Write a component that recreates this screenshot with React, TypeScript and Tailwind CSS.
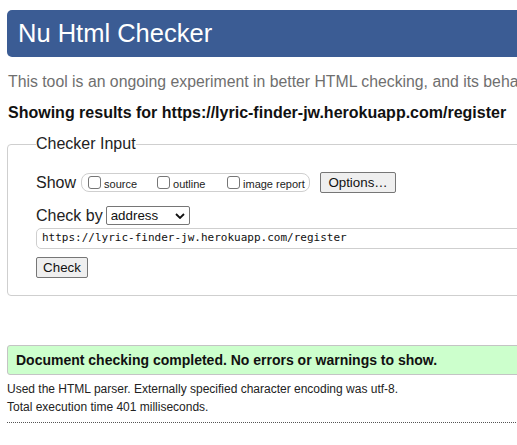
import React from 'react';

// Nu Html Checker result page (cropped view)

const sans = "font-['Liberation_Sans',Arial,sans-serif]";

function CheckOption({ label, className = '' }: { label: string; className?: string }) {
  return (
    <label className={`flex items-center ${className}`}>
      <span className="w-[13px] h-[13px] border border-[#767676] rounded-[3px] bg-white shrink-0" />
      <span className="text-[11px] leading-[13px] ml-[3px] mt-[3px] text-[#222]">{label}</span>
    </label>
  );
}

export default function App() {
  return (
    <div className={`w-[517px] h-[445px] overflow-hidden bg-white ${sans}`}>
      <div className="w-[780px] pl-[7px] pt-[10px]">
        {/* Title bar */}
        <div className="h-[47px] bg-[#3b5c94] rounded-[5px] pl-[11px] text-white text-[25.5px] leading-[47px]">
          Nu Html Checker
        </div>

        <p className="mt-[16px] pl-[1px] text-[15.8px] leading-[18px] text-[#6f6f6f] whitespace-nowrap">
          This tool is an ongoing experiment in better HTML checking, and its behavior remains subject to change
        </p>
        <p className="mt-[13px] pl-[1px] text-[16px] leading-[18px] font-bold text-[#111] whitespace-nowrap">
          Showing results for https://lyric-finder-jw.herokuapp.com/register
        </p>

        {/* Checker input */}
        <fieldset className="mt-[13px] border border-[#cfcfcf] rounded-[4px] px-[28px] pb-[17px]">
          <legend className="text-[16px] leading-[18px] text-[#222]">Checker Input</legend>

          <div className="mt-[19px] h-[21px] flex items-center">
            <span className="text-[16px] leading-[18px] text-[#222]">Show</span>
            <div className="ml-[5px] w-[229px] h-[19px] border border-[#cfcfcf] rounded-[8px] flex items-center pl-[6px]">
              <CheckOption label="source" className="w-[69px]" />
              <CheckOption label="outline" className="w-[70px]" />
              <CheckOption label="image report" />
            </div>
            <button className="ml-[10px] h-[21px] w-[76px] bg-[#efefef] border border-[#767676] rounded-[2px] text-[13.33px] text-[#111]">
              Options…
            </button>
          </div>

          <div className="mt-[13px] h-[19px] flex items-center">
            <span className="text-[16px] leading-[18px] text-[#222]">Check by</span>
            <div className="ml-[3px] w-[84px] h-[19px] border border-[#767676] rounded-[2px] flex items-center justify-between pl-[4px] pr-[4px] bg-white">
              <span className="text-[13.33px] leading-[15px] text-[#111]">address</span>
              <svg width="10" height="6" viewBox="0 0 10 6" className="mt-[1px]">
                <path d="M1 1 L5 5 L9 1" fill="none" stroke="#111" strokeWidth="1.8" />
              </svg>
            </div>
          </div>

          <div className="mt-[3px] h-[21px] w-[700px] border border-[#cfcfcf] rounded-[5px] flex items-center pl-[5px]">
            <span className="font-['DejaVu_Sans_Mono',monospace] text-[11px] text-[#111]">
              https://lyric-finder-jw.herokuapp.com/register
            </span>
          </div>

          <button className="mt-[8px] h-[21px] w-[52px] bg-[#efefef] border border-[#767676] rounded-[2px] text-[13.33px] text-[#111] block">
            Check
          </button>
        </fieldset>

        {/* Result */}
        <div className="mt-[49px] h-[30px] bg-[#ccffcc] border border-[#c4c4c4] rounded-[3px] pl-[8px] flex items-center">
          <span className="text-[14px] font-bold text-[#111] mt-[1px]">
            Document checking completed. No errors or warnings to show.
          </span>
        </div>

        <p className="mt-[5px] text-[12px] leading-[18px] text-[#222]">
          Used the HTML parser. Externally specified character encoding was utf-8.
        </p>
        <p className="text-[12px] leading-[18px] text-[#222]">Total execution time 401 milliseconds.</p>
        <div className="mt-[6px] border-t border-dotted border-[#555]" />
      </div>
    </div>
  );
}
